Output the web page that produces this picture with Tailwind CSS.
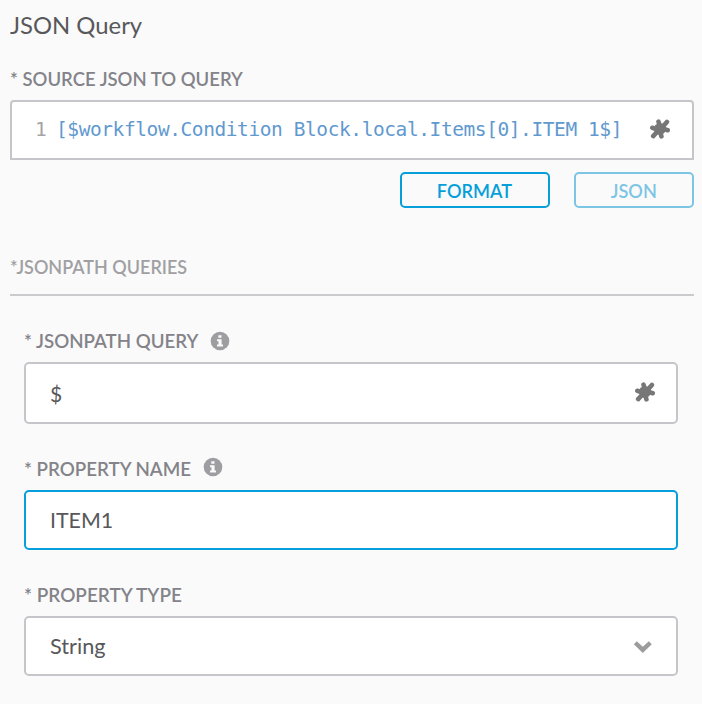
<!DOCTYPE html>
<html lang="en">
<head>
<meta charset="utf-8">
<title>JSON Query</title>
<script src="https://cdn.jsdelivr.net/npm/@tailwindcss/browser@4"></script>
</head>
<body class="bg-[#fafafa] font-[Lato,sans-serif] w-[702px] h-[704px] overflow-hidden">
<svg class="hidden">
  <symbol id="puzzle" viewBox="-10 -10 20 20">
    <g fill="currentColor" stroke="currentColor" stroke-linejoin="round" stroke-linecap="round">
      <path stroke-width="1" d="M-4-4-.2-5.2 2.4-4.8 6.6-6.8 5.2-2.7 5.5.2 3.9 3.9.8 5.2-2.4 5.1-6.4 7-4.9 2.7-5.5-.3Z"/>
      <path fill="none" stroke-width="4.6" d="M-1.5-7.4-.5-4M6.9-7.1 4-3.8M7.7 1.2 4 0M1.4 7.4.5 4M-6.8 7.1-4 4M-7.7-1.2-4 0"/>
    </g>
  </symbol>
  <symbol id="info" viewBox="0 0 20 20">
    <circle cx="10" cy="10" r="9.3" fill="#9d9da2"/>
    <path fill="#fafafa" d="M8.3 4.3h3.2v2.5H8.3zM7 8.3h4.6v5.2H13v2H7v-2h1.5v-3.2H7z"/>
  </symbol>
</svg>
<main class="pl-[10px] pr-2 pt-[10px]">
  <h1 class="h-[30px] text-[24px] leading-[30px] text-[#58585a]"><span class="inline-block origin-left scale-x-[.993]">JSON Query</span></h1>
  <label class="mt-[27px] block h-6 text-[19.5px] leading-6 font-semibold text-[#838389]"><span class="inline-block origin-left scale-x-[.948] whitespace-nowrap">* SOURCE JSON TO QUERY</span></label>
  <div class="mt-[9px] flex h-[60px] items-center rounded-t-[4px] border-2 border-[#c5c5ca] bg-white pl-[23px] pr-[22px] font-['DejaVu_Sans_Mono',monospace] text-[19.5px] tracking-[-.42px]">
    <span class="w-[21px] text-[#a5a5a5]">1</span>
    <span class="whitespace-pre text-[#6199cf]">[$workflow.Condition Block.local.Items[0].ITEM 1$]</span>
    <svg class="relative -top-[1.5px] ml-auto size-5 shrink-0 overflow-visible text-[#777]"><use href="#puzzle"/></svg>
  </div>
  <div class="mt-3 flex justify-end gap-6 text-[19.5px] font-semibold">
    <button class="h-9 w-[150px] rounded-[5px] border-2 border-[#079fd9] pt-0.5 leading-7 text-[#079fd9]"><span class="relative -left-px inline-block scale-x-[.93]">FORMAT</span></button>
    <button class="h-9 w-[120px] rounded-[5px] border-2 border-[#7dc5e5] pt-0.5 leading-7 text-[#7dc5e5]"><span class="inline-block scale-x-[.93]">JSON</span></button>
  </div>
  <h2 class="mt-[47px] h-[41px] border-b-2 border-[#cbcbcd] text-[19.5px] leading-6 font-semibold text-[#a0a0a3]"><span class="inline-block origin-left scale-x-[.922] whitespace-nowrap">*JSONPATH QUERIES</span></h2>
  <section class="pl-[14px] pr-4">
    <div class="mt-[33px] flex h-6 items-center text-[19.5px] font-semibold text-[#838389]"><label class="w-[186px] whitespace-nowrap"><span class="inline-block origin-left scale-x-[.958]">* JSONPATH QUERY</span></label><svg class="size-5"><use href="#info"/></svg></div>
    <div class="mt-[9px] flex h-[62px] items-center justify-between rounded-[5px] border-2 border-[#c5c5ca] bg-white pl-6 pr-[21px] text-[21px] text-[#58585a]"><span class="pt-px">$</span><svg class="relative -top-px size-5 text-[#777]"><use href="#puzzle"/></svg></div>
    <div class="mt-[33px] flex h-6 items-center text-[19.5px] font-semibold text-[#838389]"><label class="w-[179px] whitespace-nowrap"><span class="inline-block origin-left scale-x-[.96]">* PROPERTY NAME</span></label><svg class="mb-1 size-5"><use href="#info"/></svg></div>
    <div class="mt-[9px] flex h-[60px] items-center rounded-[5px] border-2 border-[#079fd9] bg-white pl-6 pt-px text-[21.4px] text-[#58585a]">ITEM1</div>
    <label class="mt-[33px] flex h-6 items-center text-[19.5px] font-semibold text-[#838389]"><span class="origin-left scale-x-[.97]">* PROPERTY TYPE</span></label>
    <div class="mt-[9px] flex h-[60px] items-center justify-between rounded-[5px] border-2 border-[#c5c5ca] bg-white pl-6 pr-[23px] text-[21.7px] text-[#58585a]"><span>String</span><svg class="mt-[1px] h-3 w-5" viewBox="0 0 20 12"><path fill="#9c9c9f" d="M.8 3.2 3.8.2 9.8 5.8 15.8.2 18.8 3.2 9.8 12Z"/></svg></div>
  </section>
</main>
</body>
</html>
